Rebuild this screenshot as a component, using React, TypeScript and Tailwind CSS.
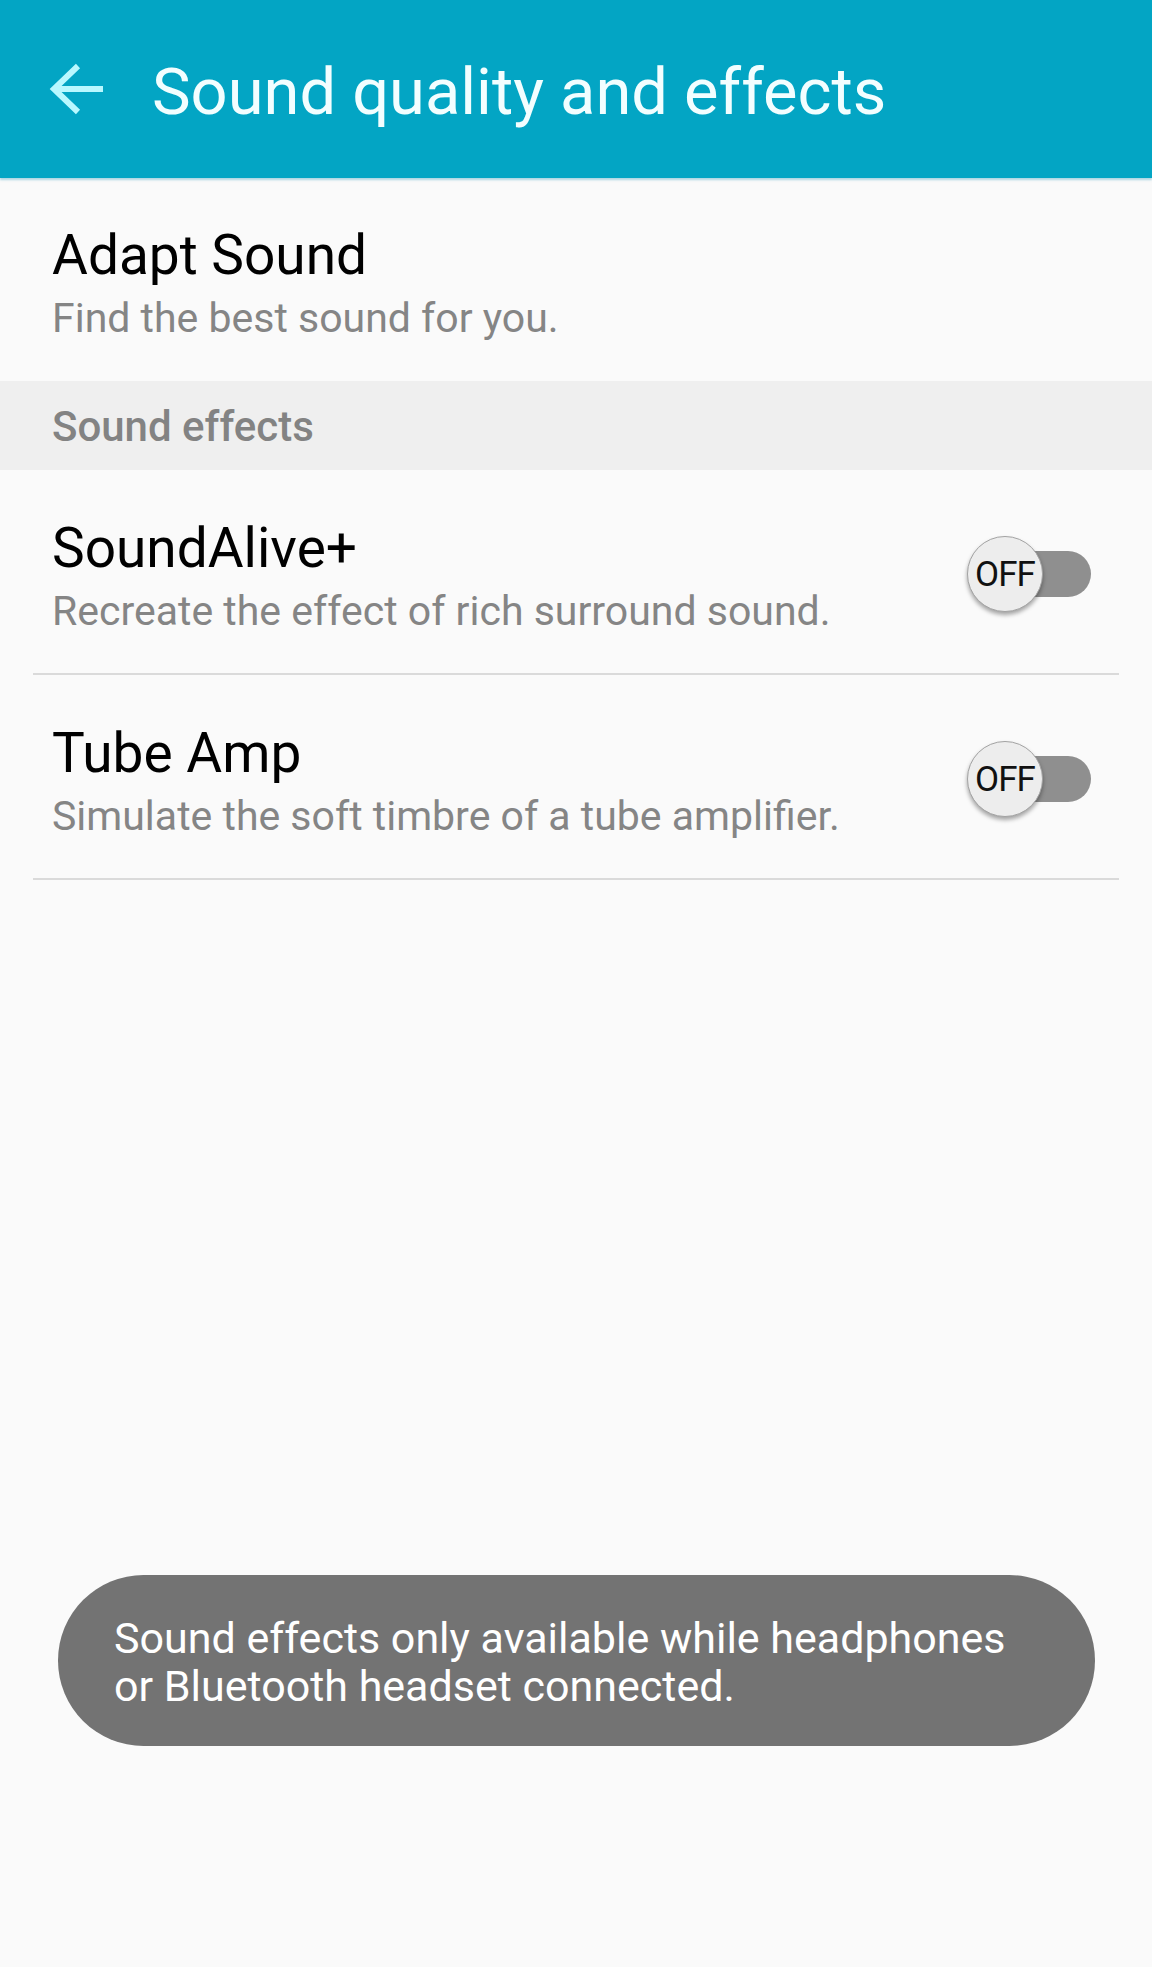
import React from "react";

type Row = {
  title: string;
  summary: string;
  toggle?: boolean;
};

const effects: Row[] = [
  { title: "SoundAlive+", summary: "Recreate the effect of rich surround sound.", toggle: true },
  { title: "Tube Amp", summary: "Simulate the soft timbre of a tube amplifier.", toggle: true },
];

function BackArrow() {
  return (
    <svg width="56" height="56" viewBox="0 0 56 56" fill="none" className="shrink-0">
      <path d="M30 5 L6 28 L30 51" stroke="#b9f8ff" strokeWidth="6" strokeLinejoin="miter" />
      <path d="M7 28 H55" stroke="#b9f8ff" strokeWidth="6" />
    </svg>
  );
}

function OffSwitch() {
  return (
    <div className="relative mb-[5px] h-[76px] w-[124px] shrink-0">
      <div className="absolute right-0 top-[15px] h-[46px] w-[90px] rounded-full bg-[#8f8f8f]" />
      <div className="absolute left-0 top-0 flex h-[76px] w-[76px] items-center justify-center rounded-full border border-[#a3a3a3] bg-[#ededed] shadow-[0_3px_4px_rgba(0,0,0,0.35)]">
        <span className="text-[35px] leading-none tracking-[-1px] text-[#111]">OFF</span>
      </div>
    </div>
  );
}

function SettingText({ title, summary }: { title: string; summary: string }) {
  return (
    <div className="min-w-0">
      <p className="text-[55px] leading-[66px] text-black">{title}</p>
      <p className="mt-[3px] text-[41px] leading-[54px] text-[#858585]">{summary}</p>
    </div>
  );
}

export default function App() {
  return (
    <div
      className="relative h-[1967px] w-[1152px] overflow-hidden bg-[#fafafa]"
      style={{ fontFamily: "Roboto, 'Noto Sans', sans-serif" }}
    >
      <header className="flex h-[178px] items-center bg-[#03a5c4] pl-[48px] shadow-[0_2px_2px_rgba(120,190,210,0.6)]">
        <BackArrow />
        <h1 className="ml-[48px] mt-[6px] text-[65px] leading-[64px] text-[#f2feff]">
          Sound quality and effects
        </h1>
      </header>

      <div className="px-[52px] pb-[36px] pt-[44px]">
        <SettingText title="Adapt Sound" summary="Find the best sound for you." />
      </div>

      <div className="h-[89px] bg-[#efefef] px-[52px] pt-[3px]">
        <p className="text-[42px] font-medium leading-[86px] text-[#838383]">Sound effects</p>
      </div>

      <ul className="mx-[33px]">
        {effects.map((row) => (
          <li
            key={row.title}
            className="flex items-center justify-between border-b-2 border-[#dadada] pb-[35px] pl-[19px] pr-[28px] pt-[45px]"
          >
            <SettingText title={row.title} summary={row.summary} />
            {row.toggle && <OffSwitch />}
          </li>
        ))}
      </ul>

      <div className="absolute left-[58px] right-[57px] top-[1575px] rounded-full bg-[#737373] pb-[36px] pl-[56px] pr-[30px] pt-[39px]">
        <p className="text-[43px] leading-[48px] text-white">
          Sound effects only available while headphones
          <br />
          or Bluetooth headset connected.
        </p>
      </div>
    </div>
  );
}
